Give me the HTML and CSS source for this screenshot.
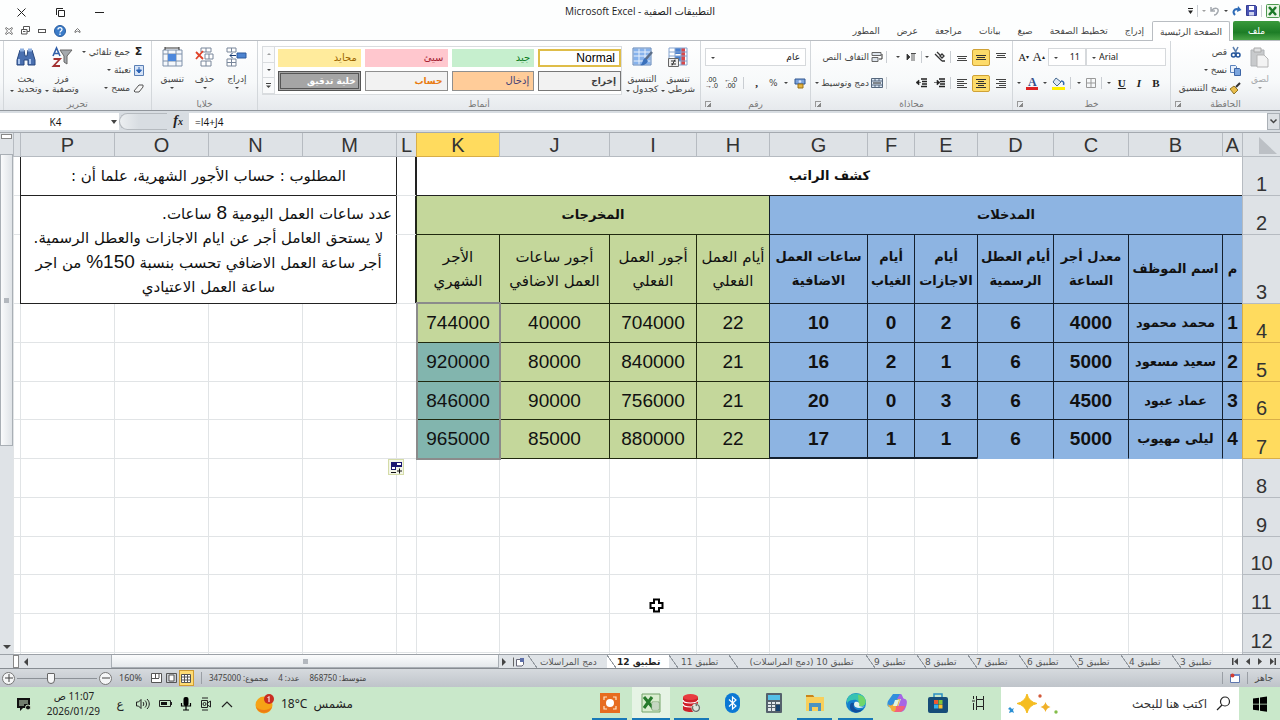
FILE: index.html
```html
<!DOCTYPE html>
<html lang="ar" dir="rtl">
<head>
<meta charset="utf-8">
<title>التطبيقات الصفية - Microsoft Excel</title>
<link rel="stylesheet" href="styles.css">
</head>
<body>
<header class="titlebar">
  <div class="quick">
    <svg width="14" height="14" viewBox="0 0 14 14"><rect x=".5" y=".5" width="13" height="13" rx="1" fill="#e9f5e6" stroke="#4d9a50"/><path d="M3 3l7 8M10 3l-7 8" stroke="#1d7a2a" stroke-width="2.4"/></svg>
    <i class="vsep"></i>
    <button aria-label="حفظ"><svg width="11" height="11" viewBox="0 0 11 11"><path d="M.5.5h9l1 1v9H.5z" fill="#4a55b5" stroke="#343c93"/><path d="M3 1h5v4H3z" fill="#fff"/><path d="M3 7h5v3.500H3z" fill="#cdd3ee"/></svg></button>
    <button aria-label="إعادة"><svg width="10" height="10" viewBox="0 0 10 10"><path d="M3 9C0 6 2 2 7 3.500" fill="none" stroke="#2f6cb8" stroke-width="2"/><path d="M6 0l3.500 4L5 6z" fill="#2f6cb8"/></svg></button>
    <i class="caret"></i>
    <button aria-label="تراجع"><svg width="10" height="10" viewBox="0 0 10 10"><path d="M1 1v4h4M1.500 4.500C5 1 9 2 8 5.500 7 8 5 9 4 9" fill="none" stroke="#a3a8ae" stroke-width="1.500"/></svg></button>
    <i class="caret dim"></i><i class="vsep"></i>
    <button aria-label="تخصيص"><svg width="5" height="6" viewBox="0 0 5 6"><path d="M0 .5h5" stroke="#222"/><path d="M0 2.500h5L2.500 6z" fill="#222"/></svg></button>
  </div>
  <h1 class="title">التطبيقات الصفية - Microsoft Excel</h1>
  <div class="window-buttons">
    <button aria-label="تصغير"><svg width="9" height="9" viewBox="0 0 9 9"><path d="M0 4.500h9" stroke="#222"/></svg></button>
    <button aria-label="استعادة"><svg width="9" height="9" viewBox="0 0 9 9"><path d="M2.500 2.500h6v6h-6zM.5 7V.5H7" fill="none" stroke="#222"/></svg></button>
    <button aria-label="إغلاق"><svg width="9" height="9" viewBox="0 0 9 9"><path d="M.5.5l8 8M8.500.5l-8 8" stroke="#222"/></svg></button>
  </div>
</header>

<nav class="tabs">
  <button class="file-tab">ملف</button>
  <button class="tab active">الصفحة الرئيسية</button>
  <button class="tab">إدراج</button>
  <button class="tab">تخطيط الصفحة</button>
  <button class="tab">صيغ</button>
  <button class="tab">بيانات</button>
  <button class="tab">مراجعة</button>
  <button class="tab">عرض</button>
  <button class="tab">المطور</button>
  <div class="book-buttons">
    <button aria-label="طي الشريط"><svg width="7" height="7" viewBox="0 0 7 7"><path d="M1 4l2.500-2.500L6 4v1.500L3.500 4 1 5.500z" fill="#fff" stroke="#555" stroke-width=".8"/></svg></button>
    <button aria-label="تعليمات"><svg width="12" height="12" viewBox="0 0 12 12"><circle cx="6" cy="6" r="5.500" fill="#3b7cc9" stroke="#2a5d9f"/><path d="M4 4.500C4 2 8 2 8 4.500 8 6 6 6 6 7.500M6 8.500V10" fill="none" stroke="#fff" stroke-width="1.300"/></svg></button>
    <button aria-label="تصغير المصنف"><svg width="8" height="6" viewBox="0 0 8 6"><rect x=".5" y="1.500" width="7" height="3" fill="#fff" stroke="#555"/></svg></button>
    <button aria-label="استعادة المصنف"><svg width="9" height="9" viewBox="0 0 9 9"><path d="M2.500 3V.5h6v5H6M.5 3.500h5.500v4.500H.5zM2 5.500h2.500" fill="none" stroke="#555"/></svg></button>
    <button aria-label="إغلاق المصنف"><svg width="8" height="8" viewBox="0 0 8 8"><path d="M1 .5l3 2 3-2 .5 1-2 2.500 2 2.500-.5 1-3-2-3 2-.5-1 2-2.500-2-2.500z" fill="#fff" stroke="#555" stroke-width=".8"/></svg></button>
  </div>
</nav>

<section class="ribbon">
  <div class="group g-clip">
    <div class="group-body">
      <button class="big disabled"><svg width="20" height="21" viewBox="0 0 20 21"><path d="M1 3h13v16H1z" fill="#c8cacc" stroke="#b0b3b6"/><path d="M4 1h7v4H4z" fill="#e0e1e2" stroke="#aaa"/><path d="M7 8h7l4 4v8H7z" fill="#f3f3f3" stroke="#b5b5b5"/></svg><span>لصق</span><i class="caret dim"></i></button>
      <div class="stack">
        <button><svg width="11" height="11" viewBox="0 0 11 11"><path d="M3 0l3.500 6M8 0L5 6" stroke="#5c7fae" stroke-width="1.500"/><circle cx="3.500" cy="8" r="2" fill="none" stroke="#24549b" stroke-width="1.500"/><circle cx="8" cy="8" r="2" fill="none" stroke="#24549b" stroke-width="1.500"/></svg>قص</button>
        <button><svg width="11" height="11" viewBox="0 0 11 11"><path d="M.5.5h5l1 1v6h-6z" fill="#e8f0fb" stroke="#5a83bd"/><path d="M4.500 3.500h5l1 1v6h-6z" fill="#7ba5dd" stroke="#3c65a5"/></svg>نسخ<i class="caret"></i></button>
        <button><svg width="11" height="11" viewBox="0 0 11 11"><path d="M10 0L6 4" stroke="#333" stroke-width="2"/><path d="M4 3l4 4-4 4-4-5z" fill="#e9bd4b" stroke="#8e7429"/></svg>نسخ التنسيق</button>
      </div>
    </div>
    <div class="group-label">الحافظة<i class="launch"></i></div>
  </div>

  <div class="group g-font">
    <div class="group-body rows">
      <div class="tool-row">
        <div class="combos">
          <select class="combo font-name" aria-label="الخط"><option>Arial</option></select>
          <select class="combo font-size" aria-label="حجم الخط"><option>11</option></select>
        </div>
        <button class="serif a-big" aria-label="تكبير الخط">A<sup>▴</sup></button>
        <button class="serif" aria-label="تصغير الخط">A<sup>▾</sup></button>
      </div>
      <div class="tool-row spread inset">
        <button class="serif"><b>B</b></button>
        <button class="serif"><b><em>I</em></b></button>
        <button class="serif"><b><u>U</u></b></button><i class="caret"></i><i class="vsep"></i>
        <button aria-label="حدود"><svg width="10" height="10" viewBox="0 0 10 10"><path d="M.5.5h9v9h-9zM5 0v10M0 5h10" fill="none" stroke="#999"/></svg></button><i class="caret"></i><i class="vsep"></i>
        <button aria-label="لون التعبئة"><svg width="13" height="13" viewBox="0 0 13 13"><path d="M4 1l5 4-4 4-4-4z" fill="#dce7f5" stroke="#46698f"/><path d="M9 4c3 0 3 2 2.500 4" stroke="#2d66ad" stroke-width="1.500" fill="none"/><path d="M0 10h13v3H0z" fill="#ffef00"/></svg></button><i class="caret"></i>
        <button aria-label="لون الخط" class="serif font-color">A</button><i class="caret"></i>
      </div>
    </div>
    <div class="group-label">خط<i class="launch"></i></div>
  </div>

  <div class="group g-align">
    <div class="group-body rows">
      <div class="tool-row">
        <button class="sq" aria-label="أعلى"><svg width="10" height="10" viewBox="0 0 10 10"><path d="M0 1.500h10M1 3.500h8M0 5.500h10" stroke="#444"/></svg></button>
        <button class="sq on" aria-label="وسط"><svg width="10" height="10" viewBox="0 0 10 10"><path d="M0 3.500h10M1 5.500h8M0 7.500h10" stroke="#333"/></svg></button>
        <button class="sq" aria-label="أسفل"><svg width="10" height="10" viewBox="0 0 10 10"><path d="M0 4.500h10M1 6.500h8M0 8.500h10" stroke="#444"/></svg></button>
        <i class="vsep"></i>
        <button class="sq" aria-label="الاتجاه"><svg width="12" height="12" viewBox="0 0 12 12"><path d="M1 3l7 7M3 1l3 3M8 3l2 2-2 2-2-2zM8 10h3" stroke="#333" stroke-width="1.300" fill="none"/></svg></button><i class="caret"></i><i class="vsep"></i>
        <button class="sq" aria-label="اتجاه النص"><svg width="10" height="10" viewBox="0 0 10 10"><path d="M1 2v6l3-3zM5 1.500h5M6 1v8M8 1v8" stroke="#333" fill="#333" stroke-width=".8"/></svg></button><i class="caret"></i>
        <i class="vsep push"></i>
        <button class="wide"><svg width="12" height="11" viewBox="0 0 12 11"><path d="M1 .5h9v3H1zM1 5.500h6v4H1z" fill="#dde4ec" stroke="#666"/><path d="M11 2v5H8" fill="none" stroke="#333"/></svg>التفاف النص</button>
      </div>
      <div class="tool-row">
        <button class="sq" aria-label="يمين"><svg width="10" height="10" viewBox="0 0 10 10"><path d="M0 1.500h10M3 3.500h7M0 5.500h10M3 7.500h7M0 9.500h10" stroke="#444"/></svg></button>
        <button class="sq on" aria-label="توسيط"><svg width="10" height="10" viewBox="0 0 10 10"><path d="M0 1.500h10M2 3.500h6M0 5.500h10M2 7.500h6M0 9.500h10" stroke="#333"/></svg></button>
        <button class="sq" aria-label="يسار"><svg width="10" height="10" viewBox="0 0 10 10"><path d="M0 1.500h10M0 3.500h7M0 5.500h10M0 7.500h7M0 9.500h10" stroke="#444"/></svg></button>
        <i class="vsep"></i>
        <button class="sq" aria-label="إنقاص المسافة"><svg width="11" height="10" viewBox="0 0 11 10"><path d="M5 1h6M6 3.500h5M6 6h5M5 8.500h6" stroke="#222" stroke-width="1.300"/><path d="M0 4.500h5M3 2l3 2.500L3 7z" stroke="#222" fill="#222" stroke-width=".6"/></svg></button>
        <button class="sq" aria-label="زيادة المسافة"><svg width="11" height="10" viewBox="0 0 11 10"><path d="M5 1h6M6 3.500h5M6 6h5M5 8.500h6" stroke="#222" stroke-width="1.300"/><path d="M1 4.500h4M3 2L0 4.500 3 7z" stroke="#222" fill="#222" stroke-width=".6"/></svg></button>
        <i class="vsep push"></i>
        <button class="wide"><svg width="12" height="11" viewBox="0 0 12 11"><path d="M.5.5h11v9H.5zM0 3h12M0 7h12M4 0v3M8 0v3M4 7v3M8 7v3" fill="#dbe6f3" stroke="#55677c"/><path d="M2 5h8" stroke="#222"/></svg>دمج وتوسيط<i class="caret"></i></button>
      </div>
    </div>
    <div class="group-label">محاذاة<i class="launch"></i></div>
  </div>

  <div class="group g-num">
    <div class="group-body rows">
      <div class="tool-row"><select class="combo number-format" aria-label="تنسيق الأرقام"><option>عام</option></select></div>
      <div class="tool-row spread">
        <button aria-label="عملة"><svg width="12" height="11" viewBox="0 0 12 11"><path d="M1 1h10v5H1z" fill="#7da3dc" stroke="#31578f"/><circle cx="6" cy="3.500" r="1.300" fill="#dce8fa"/><path d="M4 6h5v4H4z" fill="#e8b43d" stroke="#9a7219"/></svg></button><i class="caret"></i>
        <button>%</button><button class="serif"><b>,</b></button><i class="vsep"></i>
        <button class="decimals" aria-label="زيادة المنازل"><span>←.0</span><span>.00</span></button>
        <button class="decimals" aria-label="إنقاص المنازل"><span>.00</span><span>→.0</span></button>
      </div>
    </div>
    <div class="group-label">رقم<i class="launch"></i></div>
  </div>

  <div class="group g-styles">
    <div class="group-body">
      <button class="big two"><svg width="20" height="21" viewBox="0 0 20 21"><path d="M1 1h18v17H1z" fill="#fff"/><path d="M7 1h6v6H7z" fill="#4a80ce"/><path d="M13 1h4v17h-4z" fill="#d8484a"/><path d="M7 9h6v5H7z" fill="#4a80ce"/><path d="M1 1h18v17H1zM7 1v17M13 1v17M1 5h18M1 9h18M1 14h18" fill="none" stroke="#86a5d0"/><path d="M.5 11.500h10v8H.5z" fill="#eee" stroke="#666"/><path d="M3 14h5M3 17h5M7 12.500l-3 6" stroke="#333"/></svg><span>تنسيق<br>شرطي <i class="caret"></i></span></button>
      <button class="big two"><svg width="21" height="21" viewBox="0 0 21 21"><path d="M1 1h18v17H1z" fill="#86b2ec"/><path d="M1 1h18v17H1zM7 1v17M13 1v17M1 5h18M1 9h18M1 14h18" fill="none" stroke="#e9f1fb"/><path d="M1 1h18v17H1z" fill="none" stroke="#6689b9"/><path d="M20 5l-7 8" stroke="#5c6e88" stroke-width="2.500"/><path d="M13 11l3 3c-2 4-5 5-8 4 3-1 2-5 5-7z" fill="#3a70bb"/></svg><span>التنسيق<br>كجدول <i class="caret"></i></span></button>
      <div class="gallery">
        <div class="swatches">
          <button class="sw normal">Normal</button><button class="sw good">جيد</button><button class="sw bad">سيئ</button><button class="sw neutral">محايد</button>
          <button class="sw output">إخراج</button><button class="sw entry">إدخال</button><button class="sw calc">حساب</button><button class="sw check">خلية تدقيق</button>
        </div>
        <div class="gallery-scroll">
          <button aria-label="لأعلى"><i class="caret up dim"></i></button><button aria-label="لأسفل"><i class="caret"></i></button><button aria-label="المزيد"><svg width="5" height="6" viewBox="0 0 5 6"><path d="M0 .5h5" stroke="#444"/><path d="M0 2.500h5L2.500 5z" fill="#444"/></svg></button>
        </div>
      </div>
    </div>
    <div class="group-label">أنماط</div>
  </div>

  <div class="group g-cells">
    <div class="group-body">
      <button class="big"><svg width="21" height="21" viewBox="0 0 21 21"><path d="M1 1h9v4H1zM1 12h9v7H1zM5.500 1v4M5.500 12v7M1 15.500h9" fill="#fff" stroke="#78869a"/><path d="M11 6h9v5h-9z" fill="#4d83d0" stroke="#2f5b9d"/><path d="M10 8.500H4M6.500 6L4 8.500 6.500 11" fill="none" stroke="#1d3f73"/></svg><span>إدراج</span><i class="caret"></i></button>
      <button class="big"><svg width="21" height="21" viewBox="0 0 21 21"><path d="M7 1h10v4H7zM11 7h8v5h-8zM7 14h10v5H7zM12 1v4M15 7v5M12 14v5" fill="#fff" stroke="#78869a"/><path d="M2 5l7 7M9 4l-7 8" stroke="#e0432a" stroke-width="1.800"/></svg><span>حذف</span><i class="caret"></i></button>
      <button class="big"><svg width="21" height="21" viewBox="0 0 21 21"><path d="M1 3h19v16H1z" fill="#f5f8fc"/><path d="M1 3h19v16H1zM6 3v16M14 3v16M1 7h19M1 14h19" fill="none" stroke="#7f91aa"/><path d="M6 7h8v7H6z" fill="#4d88dc"/><path d="M3 1h14M3 0v3M17 0v3" stroke="#333"/></svg><span>تنسيق</span><i class="caret"></i></button>
    </div>
    <div class="group-label">خلايا</div>
  </div>

  <div class="group g-edit">
    <div class="group-body">
      <div class="stack">
        <button><b class="sigma">Σ</b>جمع تلقائي<i class="caret"></i></button>
        <button><svg width="10" height="11" viewBox="0 0 10 11"><path d="M.5.5h9v10h-9z" fill="#d5e3f7" stroke="#5a7fb4"/><path d="M5 2v5M2.500 5L5 8l2.500-3z" fill="#2a62b5" stroke="#2a62b5"/></svg>تعبئة<i class="caret"></i></button>
        <button><svg width="11" height="9" viewBox="0 0 11 9"><path d="M1 7l5-6h4v2L6 8H2z" fill="#f7f7f7" stroke="#555"/></svg>مسح<i class="caret"></i></button>
      </div>
      <button class="big two"><svg width="21" height="21" viewBox="0 0 21 21"><path d="M8 3h12l-5 6v8l-3-2V9z" fill="#a5a9ae" stroke="#666"/><path d="M1 9L4.500 1 8 9M2.500 6.500h4" fill="none" stroke="#315fa8" stroke-width="1.600"/><path d="M1.500 12H8l-6.500 7H8" fill="none" stroke="#a33232" stroke-width="1.800"/></svg><span>فرز<br>وتصفية <i class="caret"></i></span></button>
      <button class="big two"><svg width="20" height="21" viewBox="0 0 20 21"><path d="M4 3h4l1 6h2l1-6h4l3 10v5h-7v-5H8v5H1v-5z" fill="#4a70b0" stroke="#27477f"/><path d="M4 3h4M12 3h4" stroke="#8fb0e0" stroke-width="3"/><path d="M3 12v5M14 12v5" stroke="#a9c4ed" stroke-width="2"/></svg><span>بحث<br>وتحديد <i class="caret"></i></span></button>
    </div>
    <div class="group-label">تحرير</div>
  </div>
</section>

<section class="formula-bar">
  <button class="expand" aria-label="توسيع"><svg width="7" height="5" viewBox="0 0 7 5"><path d="M.5.5l3 3 3-3" fill="none" stroke="#444" stroke-width="1.500"/></svg></button>
  <input class="formula" dir="ltr" aria-label="الصيغة" value="=I4+J4">
  <div class="fx"><em>f<small>x</small></em><i class="knob"></i></div>
  <div class="name-box"><i class="caret"></i><input dir="ltr" aria-label="مربع الاسم" value="K4"></div>
</section>

<main class="workspace">
  <div class="sheet">
    <table>
      <colgroup><col class="w-head"><col class="w-a"><col class="w-b"><col class="w-c"><col class="w-d"><col class="w-e"><col class="w-f"><col class="w-g"><col class="w-h"><col class="w-i"><col class="w-j"><col class="w-k"><col class="w-a"><col class="w-b"><col class="w-b"><col class="w-b"><col class="w-b"><col></colgroup>
      <thead>
        <tr><th class="corner"><svg width="20" height="18" viewBox="0 0 20 18"><path d="M1 0v17h18z" fill="#bcc0c5"/></svg></th><th>A</th><th>B</th><th>C</th><th>D</th><th>E</th><th>F</th><th>G</th><th>H</th><th>I</th><th>J</th><th class="picked">K</th><th>L</th><th>M</th><th>N</th><th>O</th><th>P</th><th></th></tr>
      </thead>
      <tbody>
        <tr><th>1</th><td colspan="11" class="banner">كشف الراتب</td><td class="gap"></td><td colspan="4" class="note one">المطلوب : حساب الأجور الشهرية، علما أن :</td><td></td></tr>
        <tr><th>2</th><td colspan="7" class="in">المدخلات</td><td colspan="4" class="out strong">المخرجات</td><td class="gap"></td><td colspan="4" rowspan="2" class="note"><p class="first">عدد ساعات العمل اليومية <span class="num">8</span> ساعات.</p><p>لا يستحق العامل أجر عن ايام الاجازات والعطل الرسمية.</p><p>أجر ساعة العمل الاضافي تحسب بنسبة <span class="num">150%</span> من اجر</p><p>ساعة العمل الاعتيادي</p></td><td></td></tr>
        <tr class="tall"><th>3</th><td class="in">م</td><td class="in">اسم الموظف</td><td class="in">معدل أجر<br>الساعة</td><td class="in">أيام العطل<br>الرسمية</td><td class="in">أيام<br>الاجازات</td><td class="in">أيام<br>الغياب</td><td class="in">ساعات العمل<br>الاضافية</td><td class="out">أيام العمل<br>الفعلي</td><td class="out">أجور العمل<br>الفعلي</td><td class="out">أجور ساعات<br>العمل الاضافي</td><td class="out">الأجر<br>الشهري</td><td class="gap"></td><td></td></tr>
        <tr><th class="picked">4</th><td class="in n">1</td><td class="in">محمد محمود</td><td class="in n">4000</td><td class="in n">6</td><td class="in n">2</td><td class="in n">0</td><td class="in n">10</td><td class="out n">22</td><td class="out n">704000</td><td class="out n">40000</td><td class="out n anchor">744000<i class="selection"></i></td><td></td><td></td><td></td><td></td><td></td><td></td></tr>
        <tr><th class="picked">5</th><td class="in n">2</td><td class="in">سعيد مسعود</td><td class="in n">5000</td><td class="in n">6</td><td class="in n">1</td><td class="in n">2</td><td class="in n">16</td><td class="out n">21</td><td class="out n">840000</td><td class="out n">80000</td><td class="out n sel">920000</td><td></td><td></td><td></td><td></td><td></td><td></td></tr>
        <tr class="short"><th class="picked">6</th><td class="in n">3</td><td class="in">عماد عبود</td><td class="in n">4500</td><td class="in n">6</td><td class="in n">3</td><td class="in n">0</td><td class="in n">20</td><td class="out n">21</td><td class="out n">756000</td><td class="out n">90000</td><td class="out n sel">846000</td><td></td><td></td><td></td><td></td><td></td><td></td></tr>
        <tr><th class="picked">7</th><td class="in n plain">4</td><td class="in plain">ليلى مهيوب</td><td class="in n plain">5000</td><td class="in n plain">6</td><td class="in n thick">1</td><td class="in n thick">1</td><td class="in n thick">17</td><td class="out n">22</td><td class="out n">880000</td><td class="out n">85000</td><td class="out n sel">965000</td><td></td><td></td><td></td><td></td><td></td><td></td></tr>
        <tr><th>8</th><td></td><td></td><td></td><td></td><td></td><td></td><td></td><td></td><td></td><td></td><td></td><td class="anchor"><button class="fill-options" aria-label="خيارات التعبئة"><svg width="13" height="13" viewBox="0 0 13 13"><path d="M1 1h11v5H6v3H1z" fill="#1a1670"/><path d="M7 2h4v2H7zM2 6h3v2H2z" fill="#fff"/><path d="M1 11.500h5M9.500 7.500v5M7 10h5" stroke="#111"/></svg></button></td><td></td><td></td><td></td><td></td><td></td></tr>
        <tr><th>9</th><td></td><td></td><td></td><td></td><td></td><td></td><td></td><td></td><td></td><td></td><td></td><td></td><td></td><td></td><td></td><td></td><td></td></tr>
        <tr class="short"><th>10</th><td></td><td></td><td></td><td></td><td></td><td></td><td></td><td></td><td></td><td></td><td></td><td></td><td></td><td></td><td></td><td></td><td></td></tr>
        <tr><th>11</th><td></td><td></td><td></td><td></td><td></td><td></td><td></td><td></td><td class="anchor"><svg class="cursor" width="15" height="15" viewBox="0 0 15 15"><path d="M5 1.500h5V5h3.500v5H10v3.500H5V10H1.500V5H5z" fill="#fff" stroke="#000" stroke-width="2"/></svg></td><td></td><td></td><td></td><td></td><td></td><td></td><td></td><td></td></tr>
        <tr><th>12</th><td></td><td></td><td></td><td></td><td></td><td></td><td></td><td></td><td></td><td></td><td></td><td></td><td></td><td></td><td></td><td></td><td></td></tr>
        <tr><th></th><td></td><td></td><td></td><td></td><td></td><td></td><td></td><td></td><td></td><td></td><td></td><td></td><td></td><td></td><td></td><td></td><td></td></tr>
      </tbody>
    </table>
  </div>
  <div class="vscroll"><i class="split"></i><button aria-label="لأعلى"><i class="caret up mid"></i></button><div class="vthumb"><i class="grip"></i></div><span class="space"></span><button aria-label="لأسفل"><i class="caret mid"></i></button></div>
</main>

<section class="sheet-bar">
  <div class="sheet-nav">
    <button aria-label="الأول"><svg width="6" height="7" viewBox="0 0 6 7"><path d="M0 0l4 3.500L0 7zM4.500 0H6v7H4.500z" fill="#444"/></svg></button>
    <button aria-label="السابق"><svg width="4" height="7" viewBox="0 0 4 7"><path d="M0 0l4 3.500L0 7z" fill="#444"/></svg></button>
    <button aria-label="التالي"><svg width="4" height="7" viewBox="0 0 4 7"><path d="M4 0L0 3.500 4 7z" fill="#444"/></svg></button>
    <button aria-label="الأخير"><svg width="6" height="7" viewBox="0 0 6 7"><path d="M6 0L2 3.500 6 7zM0 0h1.500v7H0z" fill="#444"/></svg></button>
  </div>
  <button class="st">تطبيق 3</button><button class="st">تطبيق 4</button><button class="st">تطبيق 5</button><button class="st">تطبيق 6</button><button class="st">تطبيق 7</button><button class="st">تطبيق 8</button><button class="st">تطبيق 9</button><button class="st long">تطبيق 10 (دمج المراسلات)</button><button class="st mid-tab">تطبيق 11</button><button class="st current">تطبيق 12</button><button class="st merge">دمج المراسلات</button>
  <button class="new-sheet" aria-label="ورقة جديدة"><svg width="12" height="10" viewBox="0 0 12 10"><path d="M.5.500v9" stroke="#666"/><path d="M3.500 2.500h7v5L9 9H3.500z" fill="#fff" stroke="#667"/><path d="M7 1h4v4H7z" fill="#5d6ea8"/></svg></button>
  <div class="hscroll"><button class="narrow" aria-label="يمين"><i class="tri right"></i></button><div class="hthumb"><i class="grip"></i></div><span class="space"></span><button aria-label="يسار"><i class="tri left"></i></button><i class="hsplit"></i></div>
</section>

<section class="status">
  <span>جاهز</span><i class="vsep"></i>
  <svg width="10" height="10" viewBox="0 0 10 10"><path d="M.5 1.500h9v8h-9z" fill="#fff" stroke="#5e77ae"/><path d="M0 1h10v2H0z" fill="#6d8acb"/><circle cx="2.500" cy="2.500" r="2" fill="#d33e32"/></svg><i class="vsep"></i>
  <span class="stats"><span>متوسط: 868750</span><span>عدد: 4</span><span>مجموع: 3475000</span></span>
  <i class="vsep"></i>
  <div class="views">
    <button class="on" aria-label="عادي"><svg width="10" height="9" viewBox="0 0 10 9"><path d="M.5.5h9v8h-9zM3.500 0v9M6.500 0v9M0 3h10M0 6h10" fill="#fff" stroke="#555"/></svg></button>
    <button aria-label="تخطيط"><svg width="11" height="10" viewBox="0 0 11 10"><path d="M.5.5h10v9H.5z" fill="#c9cdd2" stroke="#555"/><path d="M3 2h5v6H3z" fill="#fff" stroke="#555"/></svg></button>
    <button aria-label="فواصل"><svg width="11" height="10" viewBox="0 0 11 10"><path d="M.5.5h10v9H.5zM4.500 0v5M8 0v5M0 5.500h8" fill="#fff" stroke="#555"/></svg></button>
  </div>
  <span class="zoom-value">160%</span>
  <button class="round" aria-label="تصغير"><svg width="8" height="8" viewBox="0 0 8 8"><path d="M0 4h8" stroke="#444"/></svg></button>
  <input class="zoom" type="range" aria-label="تكبير وتصغير" min="0" max="100" value="58">
  <button class="round" aria-label="تكبير"><svg width="8" height="8" viewBox="0 0 8 8"><path d="M0 4h8M4 0v8" stroke="#444"/></svg></button>
</section>

<footer class="taskbar">
  <button class="start" aria-label="ابدأ"><svg width="14" height="14" viewBox="0 0 14 14"><path d="M0 1.500l6-.8v6H0zM7 .500l7-1v7.200H7zM0 7.500h6v6L0 12.700zM7 7.500h7v7.200L7 13.700z" fill="#000"/></svg></button>
  <label class="search"><svg width="15" height="15" viewBox="0 0 15 15"><circle cx="9" cy="5.500" r="4.500" fill="none" stroke="#222" stroke-width="1.200"/><path d="M6 9l-5 5" stroke="#222" stroke-width="1.200"/></svg><input placeholder="اكتب هنا للبحث" aria-label="بحث">
    <svg width="52" height="22" viewBox="0 0 52 22"><path d="M20 1Q22 9 30 10.500 22 12 20 20 18 12 10 10.500 18 9 20 1z" fill="#f5bd22" stroke="#f5bd22"/><path d="M38.500 9q1 4 5 5-4 1-5 5-1-4-5-5 4-1 5-5z" fill="#f0b12a"/><path d="M3 14l2 2 2-1-1 2 1 3-2-1-3 1 1-3-2-1z" fill="#2a8fd3"/><circle cx="33" cy="3" r="1.700" fill="#d3593a"/><circle cx="49" cy="19" r="1.700" fill="#83bd4a"/></svg></label>
  <div class="apps">
    <button aria-label="عرض المهام"><svg width="15" height="14" viewBox="0 0 15 14"><path d="M5.500 3.500h7v7h-7zM5.500 0v3.500M12.500 0v3.500M5.500 10.500V14M12.500 10.500V14M2.500 0v3M2.500 7v7M1 5h3" fill="none" stroke="#222"/></svg></button>
    <button aria-label="المتجر"><svg width="20" height="20" viewBox="0 0 20 20"><path d="M6 5V1h8v4" fill="none" stroke="#2a8fc4" stroke-width="1.500"/><rect y="4" width="20" height="16" rx="2" fill="#164c78"/><path d="M6 7h4v4H6z" fill="#ef5a32"/><path d="M10.500 7h4v4h-4z" fill="#82c63a"/><path d="M6 11.500h4v4H6z" fill="#32b1ee"/><path d="M10.500 11.500h4v4h-4z" fill="#fbc12c"/></svg></button>
    <button aria-label="Copilot"><svg width="20" height="20" viewBox="0 0 20 20"><path d="M6 1h7c2 0 2 3 3 5h-5L8 14H3c-3 0-3-3-2-6z" fill="#318fdc"/><path d="M13 1c3 0 2 5 5 5 3 1 2 6 0 10-1 2-3 3-5 3l-2-5 3-8h-4z" fill="#a765e5"/><path d="M1 11c2 3 6 1 8-4l4-1-3 11c-1 3-6 2-6-1-1-2-3-2-3-5z" fill="#f1ad3c"/><path d="M9 13h9c-1 4-3 6-6 6H6c3 0 3-4 3-6z" fill="#f2607c"/><path d="M8 7h4l-2 6H6z" fill="#e2f4df"/></svg></button>
    <button class="open" aria-label="Edge"><svg width="20" height="20" viewBox="0 0 20 20"><circle cx="10" cy="10" r="10" fill="#1480ce"/><path d="M1 7C3-2 19-2 20 9c0 4-4 5-7 4 1-4-2-7-6-6-3 0-5 1-6 4z" fill="#36c3b2"/><path d="M12 2c5 0 9 4 7 9-1 2-4 3-6 2z" fill="#70d66a"/><path d="M8 10c-2 5 3 9 9 6-4 6-14 4-13-3 0-3 2-4 4-3z" fill="#124f9c"/><path d="M9 9c-2 2-1 6 4 6 3 0 5-1 6-2-1 1-4 1-6 0 1-2 0-5-4-4z" fill="#e4f3ec"/></svg></button>
    <button class="open" aria-label="المستكشف"><svg width="20" height="18" viewBox="0 0 20 18"><path d="M1 1h7l2 3H1z" fill="#c9841b"/><path d="M1 3h18v14H1z" fill="#f8cf5b"/><path d="M4 17V9h12v8h-3v-4H7v4z" fill="#4b93c2"/></svg></button>
    <button aria-label="الحاسبة"><svg width="16" height="20" viewBox="0 0 16 20"><rect width="16" height="20" rx="1" fill="#55616c"/><path d="M2 2h12v5H2z" fill="#54c0e8"/><path d="M2 9h3v2H2zM6 9h3v2H6zM10 9h4v2h-4zM2 12h3v2H2zM6 12h3v2H6zM2 15h3v3H2zM6 15h3v3H6z" fill="#e1e7eb"/><path d="M10 12h4v6h-4z" fill="#16406d"/></svg></button>
    <button aria-label="Bluetooth"><svg width="15" height="20" viewBox="0 0 15 20"><rect width="15" height="20" rx="7.500" fill="#0b78d4"/><path d="M4 6.500l7 6.500-3.500 3V4L11 7l-7 6.500" fill="none" stroke="#fff" stroke-width="1.200"/></svg></button>
    <button class="open" aria-label="قاعدة بيانات"><svg width="19" height="20" viewBox="0 0 19 20"><path d="M1 4v12c0 4 15 4 15 0V4z" fill="#cf2029"/><ellipse cx="8.500" cy="4" rx="7.500" ry="3" fill="#e83c40"/><path d="M1 7c0 4 15 4 15 0M1 11c0 4 15 4 15 0" fill="none" stroke="#fff" stroke-width="1.200"/><circle cx="14" cy="15" r="4.500" fill="#dde5dc"/><path d="M11 13a3.500 3.500 0 1 0 4-1.500l-2-1M15 11l-1 2" fill="none" stroke="#66736c" stroke-width="1.300"/></svg></button>
    <button class="open front" aria-label="Excel"><svg width="20" height="20" viewBox="0 0 20 20"><path d="M1 1h18v18H1z" fill="#d9edcf" stroke="#75a36b"/><path d="M3 4l9 11M11 4L3 15" stroke="#267a2b" stroke-width="3"/><path d="M11 9h7v8h-7z" fill="#fff" stroke="#82a77b"/><path d="M12 11h5M12 13h5M12 15h5" stroke="#8caf85"/></svg></button>
    <button class="open" aria-label="مسجل الشاشة"><svg width="20" height="20" viewBox="0 0 20 20"><path d="M0 0h20v20H0z" fill="#e76c20"/><circle cx="10" cy="10" r="4" fill="#fff"/><path d="M4 7V4h3M13 4h3v3M16 13v3h-3M7 16H4v-3" fill="none" stroke="#ffe3c7" stroke-width="1.200"/></svg></button>
  </div>
  <button class="weather"><span>مشمس</span><span dir="ltr">18°C</span><svg width="20" height="20" viewBox="0 0 20 20"><circle cx="9" cy="11" r="8.500" fill="#f6a316"/><path d="M1 13a8.500 8.500 0 0 0 16 0C13 17 5 17 1 13z" fill="#ed7d14"/><circle cx="14" cy="5" r="5" fill="#c92d22"/><path d="M12.500 4l1.500-1.500V8" fill="none" stroke="#fff"/></svg></button>
  <div class="tray">
    <svg width="12" height="8" viewBox="0 0 12 8"><path d="M1 7l5-5 5 5" fill="none" stroke="#222" stroke-width="1.200"/></svg>
    <svg width="12" height="14" viewBox="0 0 12 14"><path d="M1.500 3.500h6v7h-6zM7.500 6l3-2v6l-3-2M2 1h6M2 13h6" fill="none" stroke="#222"/><circle cx="4.500" cy="7" r="1.500" fill="none" stroke="#222"/></svg>
    <svg width="10" height="14" viewBox="0 0 10 14"><rect x="2.500" width="5" height="9" rx="2" fill="#000"/><path d="M.5 6v3h9V6M5 9v4M2 13h6" fill="none" stroke="#000" stroke-width="1.200"/></svg>
    <svg width="13" height="9" viewBox="0 0 13 9"><path d="M.5 1.500h11v6H.5zM12.500 3v3" fill="none" stroke="#222"/><path d="M2 3h6v3H2z" fill="#111"/></svg>
    <svg width="14" height="12" viewBox="0 0 14 12"><path d="M.5 4h2L5 1.500v9L2.500 8h-2zM7 4c1 1 1 3 0 4M9 2.500c2 2 2 5 0 7M11 1c3 3 3 7 0 10" fill="none" stroke="#222"/></svg>
    <span class="lang">ع</span>
  </div>
  <div class="clock"><time>11:07 ص</time><time>2026/01/29</time></div>
  <button class="notes" aria-label="الإشعارات"><svg width="14" height="14" viewBox="0 0 14 14"><path d="M0 1h13v10H6l-3 3v-3H0z" fill="#111"/><path d="M2 4h9M2 6h9M2 8h5" stroke="#d3eacb"/><circle cx="11" cy="10.500" r="2.500" fill="#111" stroke="#d3eacb"/></svg></button>
</footer>
</body>
</html>
```
FILE: styles.css
```css
* { box-sizing: border-box; }
body {
  margin: 0; height: 100vh; display: flex; flex-direction: column; overflow: hidden;
  font: 9px/12px "DejaVu Sans", sans-serif; color: #444; background: #fdfefe;
}
button, input, select { font: inherit; color: inherit; border: 0; background: none; padding: 0; margin: 0; }
button { display: flex; align-items: center; justify-content: center; white-space: nowrap; }
svg { display: block; flex: none; overflow: visible; }
p { margin: 0; }
.caret { display: inline-block; flex: none; border: 2px solid transparent; border-top-color: #444; border-bottom: 0; }
.caret.up { border-top: 0; border-bottom: 2px solid #444; }
.caret.mid { border-width: 4px; border-bottom: 0; }
.caret.up.mid { border-width: 4px; border-top: 0; }
.dim { opacity: .5; }
.vsep { width: 1px; height: 12px; background: #c9cdd2; flex: none; }

.titlebar { height: 21px; flex: none; display: grid; grid-template-columns: 1fr auto 1fr; align-items: center; color: #222; }
.title { margin: 0; font: 10px/16px "Open Sans", "DejaVu Sans", sans-serif; }
.quick { display: flex; align-items: center; gap: 4px; height: 17px; }
.window-buttons { display: flex; justify-content: flex-end; align-items: center; gap: 30px; padding-left: 17px; padding-top: 3px; }

.tabs { height: 20px; flex: none; display: flex; align-items: stretch; gap: 17px; border-bottom: 1px solid #b9bdc2; }
.file-tab { width: 47px; color: #fff; background: linear-gradient(#3a9a3c, #1d7d26 60%, #49a447); border-radius: 2px 2px 0 0; margin-left: -14px; }
.tab { line-height: 18px; }
.tab.active { width: 78px; margin: 0 0 -1px -9px; border: 1px solid #b9bdc2; border-bottom: 0; border-radius: 2px 2px 0 0; background: #fff; }
.book-buttons { margin-right: auto; display: flex; align-items: center; gap: 8px; padding-left: 5px; }

.ribbon { height: 70px; flex: none; display: flex; background: linear-gradient(#fff, #f7f9fa 60%, #e6e9ed); border-bottom: 1px solid #92979d; padding-left: 3px; }
.group { display: flex; flex-direction: column; flex: none; padding: 5px 4px 0; border-left: 1px solid #d3d7db; }
.group-body { flex: 1; display: flex; min-height: 0; }
.group-body.rows { flex-direction: column; gap: 4px; padding-bottom: 4px; }
.group-label { height: 12px; line-height: 12px; text-align: center; color: #777; position: relative; }
.launch { position: absolute; left: 0; top: 3px; width: 6px; height: 6px; border: 1px solid #999; border-right: 0; border-bottom: 0; background: linear-gradient(135deg, transparent 55%, #888 55%); }
.g-clip { width: 110px; }
.g-font { width: 158px; }
.g-align { width: 202px; }
.g-num { width: 110px; }
.g-styles { flex: 1; }
.g-cells { width: 106px; }
.g-edit { width: 148px; }
.big { flex-direction: column; justify-content: flex-start; width: 34px; padding-top: 1px; line-height: 10px; }
.big span { margin-top: 6px; text-align: center; }
.big > .caret { margin-top: 3px; }
.big.two { width: 36px; }
.disabled { color: #a5a8ab; width: 32px; }
.stack { display: flex; flex-direction: column; gap: 6px; padding: 0 3px 0 0; flex: 1; align-items: flex-start; }
.stack button { gap: 3px; height: 12px; }
.sigma { font-size: 11px; color: #222; width: 11px; }
.tool-row { flex: 1; display: flex; align-items: center; gap: 3px; }
.tool-row.spread { justify-content: space-between; gap: 0; }
.tool-row.inset { padding-right: 4px; }
.combos { display: flex; }
.combo {
  appearance: none; height: 18px; border: 1px solid #d6d9dc; padding: 0 5px; color: #222;
  background: #fff url("data:image/svg+xml,%3Csvg xmlns='http://www.w3.org/2000/svg' width='4' height='2'%3E%3Cpath d='M0 0h4L2 2z' fill='%23444'/%3E%3C/svg%3E") no-repeat 5px 8px;
  font: 9px/14px "Noto Sans", "DejaVu Sans", sans-serif;
}
.font-name { width: 80px; direction: ltr; padding-left: 12px; }
.font-size { width: 38px; }
.number-format { width: 100%; }
.serif { font-family: "Liberation Serif", serif; font-size: 11px; color: #222; min-width: 12px; direction: ltr; }
.serif sup { font-size: 6px; }
.a-big { font-size: 13px; }
.font-color { font-size: 12px; font-weight: bold; color: #33508b; line-height: 10px; border-bottom: 3px solid #d22; }
.sq { width: 15px; height: 17px; }
.sq.on { width: 18px; background: #fddb6a; border: 1px solid #d0a236; border-radius: 2px; }
.push { margin-right: auto; }
.wide { width: 68px; justify-content: flex-start; gap: 2px; }
.decimals { flex-direction: column; font: 7px/6px "Liberation Sans", sans-serif; direction: ltr; color: #222; }
.gallery { flex: 1; display: flex; height: 49px; border: 1px solid #d9dcdf; background: #fff; margin-right: 2px; }
.swatches { flex: 1; display: grid; grid-template-columns: repeat(4, 1fr); gap: 4px; padding: 2px 0 3px 3px; }
.sw { justify-content: flex-start; padding: 0 4px; font: 10px/14px "DejaVu Sans", sans-serif; }
.normal { font: 12px/14px "Liberation Sans", sans-serif; color: #000; background: #fff; border: 2px solid #dfbd49; justify-content: flex-end; direction: ltr; }
.good { background: #c6efce; color: #0a7a1c; }
.bad { background: #ffc7ce; color: #a52432; }
.neutral { background: #ffeb9c; color: #9c6500; }
.output, .calc, .check { font-weight: bold; font-size: 9px; }
.output { background: #f2f2f2; border: 1px solid #777; color: #3f3f3f; }
.entry { background: #ffcc99; border: 1px solid #8f8f8f; color: #3f3f76; }
.calc { background: #f2f2f2; border: 1px solid #8f8f8f; color: #e97d14; }
.check { background: #a5a5a5; border: 3px double #555; color: #fff; padding: 0 2px; }
.gallery-scroll { width: 12px; display: grid; grid-template-rows: repeat(3, 1fr); border-right: 1px solid #d9dcdf; }
.gallery-scroll button { border-bottom: 1px solid #d9dcdf; background: #f9fafb; }

.formula-bar { height: 22px; flex: none; display: flex; padding: 2px 0; background: #d8dde2; border-bottom: 1px solid #a4a9af; }
.expand { width: 13px; background: #dce0e4; border: 1px solid #aab0b6; }
.formula { flex: 1; min-width: 0; background: #fff; padding-left: 6px; color: #111; font: 10px/16px "Open Sans", sans-serif; }
.fx { width: 70px; display: flex; align-items: center; justify-content: space-between; padding: 0 6px 0 0; font: bold 14px/16px "Liberation Serif", serif; color: #222; }
.fx em { direction: ltr; }
.fx small { font-size: 10px; }
.knob { width: 68px; flex: 0 1 48px; height: 17px; margin-right: auto; border: 1px solid #b5babf; border-right: 0; border-radius: 9px 0 0 9px; background: linear-gradient(90deg, #eceff1, #d8dde2 40%); }
.name-box { width: 119px; background: #fff; display: flex; align-items: center; padding-right: 2px; }
.name-box .caret { border-width: 4px 3px 0; }
.name-box input { flex: 1; min-width: 0; text-align: center; color: #111; font: 10px/16px "Open Sans", sans-serif; }

.workspace { flex: 1; min-height: 0; display: flex; overflow: hidden; }
.sheet { flex: 1; min-width: 0; overflow: hidden; background: #fff; }
table { width: 100%; table-layout: fixed; border-collapse: separate; border-spacing: 0; }
.w-head { width: 38px; } .w-a { width: 20px; } .w-b { width: 94px; } .w-c { width: 75px; } .w-d { width: 76px; } .w-e { width: 63px; }
.w-f { width: 47px; } .w-g { width: 98px; } .w-h { width: 73px; } .w-i { width: 87px; } .w-j { width: 110px; } .w-k { width: 83px; }
th, td { padding: 0; height: 39px; border: 0 solid #e1e4e6; border-width: 0 0 1px 1px; text-align: center; vertical-align: middle; color: #111; }
th { background: #dee2e6; border-color: #b6bbc1; color: #333; font: 20px/22px "Liberation Sans", sans-serif; }
thead th { height: 24px; }
tbody th { vertical-align: bottom; }
.corner svg { margin: 2px 2px 0 auto; }
th.picked { background: #ffdb5e; border-color: #d8ae48; }
.short > * { height: 38px; }
.tall > * { height: 69px; }
td { font: 15px/24px "DejaVu Sans", sans-serif; white-space: nowrap; }
td.n { font: 19px/24px "Liberation Sans", sans-serif; }
.in { background: #8db4e2; border-color: #14202e; }
td.in, td.strong, td.banner { font-weight: bold; font-size: 13px; }
td.in.n { font-size: 19px; }
.out { background: #c4d79b; border-color: #20290f; }
.banner { border-color: #222; }
.gap { border-left-color: #222; box-shadow: inset -1px 0 #222; }
.note { border-color: #222; background: #fff; }
.note p { line-height: 24px; }
.note .first { text-align: right; padding-right: 4px; }
.num { font: 19px/24px "Liberation Sans", sans-serif; }
.plain { border-bottom-color: #8db4e2; }
.thick { border-bottom-width: 2px; }
.sel { background: #82b5ae; }
.anchor { position: relative; }
.selection { position: absolute; z-index: 2; left: -1px; top: -2px; width: 85px; height: 158px; border: 2px solid #8b8b8b; pointer-events: none; }
.fill-options { position: absolute; z-index: 3; right: 12px; top: 0; width: 16px; height: 16px; background: #f3f5e8; border: 1px solid #d5dca8; }
.cursor { position: absolute; z-index: 3; left: 39px; top: 23px; }
.vscroll { width: 13px; flex: none; display: flex; flex-direction: column; background: #dfe3e7; align-items: stretch; }
.vscroll button { height: 14px; }
.vthumb { height: 292px; border: 1px solid #a9afb5; background: linear-gradient(90deg, #fafbfc, #dfe3e7); display: grid; place-items: center; }
.split { height: 5px; margin: 1px; border: 1px solid #888; background: #fff; }
.grip { width: 5px; height: 5px; background: #b3b8be; }
.space { flex: 1; }

.sheet-bar { height: 15px; flex: none; display: flex; align-items: stretch; background: #dfe3e7; border-top: 1px solid #9ca1a7; border-bottom: 1px solid #878c92; }
.sheet-nav { width: 57px; padding-left: 5px; display: flex; align-items: center; justify-content: space-around; }
.st { width: 51px; padding-left: 8px; background: #dfe3e7; position: relative; color: #555; justify-content: flex-end; }
.st::before { content: ""; position: absolute; left: 0; top: 0; width: 9px; height: 100%; background: linear-gradient(to top right, transparent 46%, #92989f 47%, #92989f 53%, transparent 54%); }
.st.long { width: 137px; justify-content: center; }
.st.mid-tab { width: 60px; padding-left: 12px; }
.st.current { width: 62px; padding-left: 10px; background: #fff; color: #222; font-weight: bold; }
.st.merge { width: 79px; padding-left: 12px; }
.new-sheet { width: 19px; }
.hscroll { flex: 1; display: flex; align-items: stretch; }
.hscroll button { width: 14px; }
.hscroll .narrow { width: 10px; }
.hthumb { width: 388px; background: linear-gradient(#fbfcfd, #e5e9ec); border: 1px solid #a9afb5; border-top: 0; display: grid; place-items: center; }
.tri { border: 4px solid transparent; border-right: 0; border-left: 4px solid #444; }
.tri.left { border-left: 0; border-right: 4px solid #444; }
.hsplit { width: 6px; background: #fff; border: 1px solid #888; margin-left: 13px; }

.status { height: 18px; flex: none; display: flex; align-items: center; gap: 7px; padding: 0 7px 0 2px; background: linear-gradient(#d6dade, #bfc4ca); }
.status .vsep { background: #9a9fa5; }
.stats { display: flex; gap: 10px; margin-right: auto; font: 8px/12px "Noto Sans", "DejaVu Sans", sans-serif; }
.views { display: flex; gap: 0; }
.views button { width: 15px; height: 16px; }
.views .on { background: #ffdc74; border: 1px solid #cf9c32; }
.zoom-value { font: 9px/12px "Noto Sans", sans-serif; }
.round { width: 13px; height: 13px; border: 1px solid #777; border-radius: 50%; background: #f5f6f7; }
.status .round, .status .zoom { margin-left: -5px; }
.status .round:last-child { margin-left: 0; }
.zoom { width: 80px; height: 14px; appearance: none; background: linear-gradient(#8c9197, #8c9197) no-repeat center / 100% 1px; }
.zoom::-webkit-slider-thumb { appearance: none; width: 8px; height: 11px; border: 1px solid #666; background: #f6f7f8; border-radius: 1px 1px 4px 4px; }

.taskbar { height: 33px; flex: none; display: flex; align-items: stretch; background: #c9e8ca; color: #222; font: 12px/16px "Noto Sans", "DejaVu Sans", sans-serif; }
.start { width: 41px; }
.search { width: 238px; background: #fff; display: flex; align-items: center; gap: 9px; padding: 0 8px 0 6px; }
.search input { flex: 1; min-width: 0; }
.search input::placeholder { color: #333; opacity: 1; }
.apps { display: flex; padding-right: 2px; }
.apps button { width: 35px; margin: 0 3px; border-bottom: 2px solid transparent; }
.apps .open { border-bottom-color: #1878b8; }
.apps .front { background: #e6f4e5; width: 38px; margin: 0 1px 0 2px; }
.weather { gap: 6px; margin-right: auto; }
.tray { display: flex; align-items: center; gap: 9px; margin: 0 22px 0 13px; }
.lang { width: 14px; text-align: center; }
.clock { width: 52px; display: flex; flex-direction: column; justify-content: center; text-align: center; font-size: 10px; line-height: 15px; }
.notes { width: 48px; }
```
